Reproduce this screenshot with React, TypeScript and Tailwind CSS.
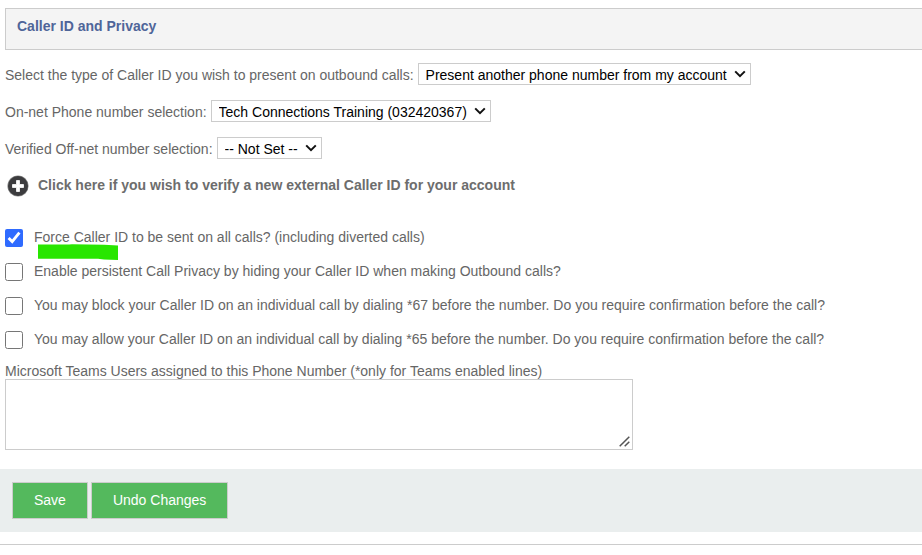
const selects = [
  {
    id: "caller-id-type",
    label: "Select the type of Caller ID you wish to present on outbound calls:",
    option: "Present another phone number from my account",
  },
  {
    id: "on-net-number",
    label: "On-net Phone number selection:",
    option: "Tech Connections Training (032420367)",
  },
  {
    id: "off-net-number",
    label: "Verified Off-net number selection:",
    option: "-- Not Set --",
  },
];

const options = [
  {
    id: "force-caller-id",
    label: "Force Caller ID to be sent on all calls? (including diverted calls)",
    checked: true,
    marked: true,
  },
  {
    id: "call-privacy",
    label: "Enable persistent Call Privacy by hiding your Caller ID when making Outbound calls?",
  },
  {
    id: "confirm-block",
    label:
      "You may block your Caller ID on an individual call by dialing *67 before the number. Do you require confirmation before the call?",
  },
  {
    id: "confirm-allow",
    label:
      "You may allow your Caller ID on an individual call by dialing *65 before the number. Do you require confirmation before the call?",
  },
];

function PlusIcon() {
  return (
    <svg className="h-[22px] w-[22px] shrink-0" viewBox="0 0 22 22" aria-hidden="true">
      <circle cx="11" cy="11" r="10.6" fill="#8a8a8a" />
      <circle cx="11" cy="11" r="10" fill="#3c3c3e" />
      <path
        d="M9.5 5.5h3v4h4v3h-4v4h-3v-4h-4v-3h4z"
        fill="#fff"
        stroke="#fff"
        strokeWidth="0.8"
        strokeLinejoin="round"
      />
    </svg>
  );
}

function Chevron() {
  return (
    <svg
      className="pointer-events-none absolute top-[7px] right-[5px] h-2 w-3"
      viewBox="0 0 12 8"
      fill="none"
      aria-hidden="true"
    >
      <path d="M1.2 1.4 6 6.2l4.8-4.8" stroke="#111" strokeWidth="2" />
    </svg>
  );
}

function Marker() {
  return (
    <svg className="absolute top-[17px] left-1 h-4 w-20" viewBox="0 0 80 16" aria-hidden="true">
      <path d="M0 .5 31 .5 34 .2 66 .8 80 1.5V16L66 15.4 60 14.8H0z" fill="#28e600" />
    </svg>
  );
}

function ResizeGrip() {
  return (
    <svg
      className="pointer-events-none absolute right-[3px] bottom-[3px] h-[11px] w-[11px]"
      viewBox="0 0 11 11"
      fill="none"
      aria-hidden="true"
    >
      <path d="M.7 10.3 10.3.7M5.7 10.3l4.6-4.6" stroke="#555" strokeWidth="1.5" />
    </svg>
  );
}

export default function App() {
  return (
    <form className="bg-white pt-2 font-['Liberation_Sans',Arial,sans-serif] text-sm text-[#666]">
      <div className="ml-[5px] h-[42px] border-y border-l border-[#ccc] bg-[#f4f4f4] px-[11px] py-[7px]">
        <h2 className="font-bold text-[#4f6599]">Caller ID and Privacy</h2>
      </div>

      <div className="px-[5px] pt-[13px]">
        <div className="flex flex-col gap-[15px]">
          {selects.map((item) => (
            <div key={item.id} className="flex h-[22px] items-center gap-1">
              <label htmlFor={item.id} className="pt-[2px]">
                {item.label}
              </label>
              <div className="relative">
                <select
                  id={item.id}
                  className="block h-[22px] appearance-none border border-[#ccc] bg-white pt-[2px] pr-[22px] pl-[7px] leading-[18px] text-black"
                >
                  <option>{item.option}</option>
                </select>
                <Chevron />
              </div>
            </div>
          ))}
        </div>

        <a href="#verify" className="mt-4 ml-[2px] flex w-fit items-center gap-[9px] font-bold text-[#6d6d6d]">
          <PlusIcon />
          <span className="pb-[2px]">
            Click here if you wish to verify a new external Caller ID for your account
          </span>
        </a>

        <div className="mt-6">
          {options.map((item) => (
            <div key={item.id} className="flex h-[34px] items-center gap-[11px]">
              <input
                id={item.id}
                type="checkbox"
                defaultChecked={item.checked}
                className="h-[18px] w-[18px] shrink-0 accent-[#2f6bff]"
              />
              <label htmlFor={item.id} className="relative pb-[3px]">
                {item.label}
                {item.marked && <Marker />}
              </label>
            </div>
          ))}
        </div>

        <label htmlFor="teams-users" className="mt-[6px] block leading-4">
          Microsoft Teams Users assigned to this Phone Number (*only for Teams enabled lines)
        </label>
        <div className="relative max-w-[628px]">
          <textarea
            id="teams-users"
            className="block h-[71px] w-full resize-none border border-[#ccc] bg-white p-1"
          />
          <ResizeGrip />
        </div>
      </div>

      <div className="mt-[19px] flex h-[63px] items-center gap-[3px] bg-[#eaeeee] px-3">
        <button type="submit" className="h-[37px] border border-[#ccc] bg-[#54b95d] px-[21px] pb-[2px] text-white">
          Save
        </button>
        <button type="reset" className="h-[37px] border border-[#ccc] bg-[#54b95d] px-[21px] pb-[2px] text-white">
          Undo Changes
        </button>
      </div>

      <hr className="mt-3 border-[#ccc]" />
    </form>
  );
}
